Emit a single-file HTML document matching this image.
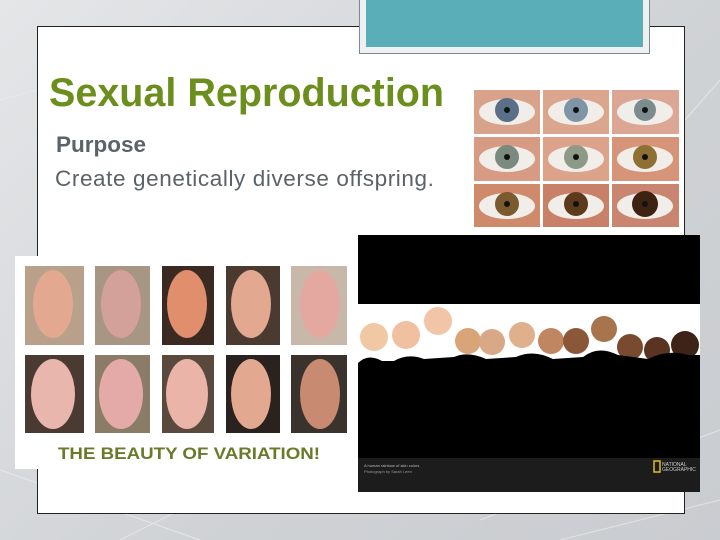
<!DOCTYPE html>
<html><head><meta charset="utf-8"><style>
body{margin:0;width:720px;height:540px;overflow:hidden;background:linear-gradient(135deg,#e4e6e8,#cfd2d5 60%,#c9ccd0);font-family:"Liberation Sans",sans-serif;position:relative}
.abs{position:absolute}
</style></head><body>
<svg class="abs" style="left:0;top:0" width="720" height="540"><g stroke="#e8eaec" stroke-width="1" fill="none" opacity=".8"><path d="M0 470 L200 540 M120 540 L260 470 M480 520 L720 430 M560 540 L720 500 M0 100 L37 90 M685 120 L720 80"/></g></svg>
<div class="abs" style="left:37px;top:26px;width:646px;height:486px;background:#fff;border:1px solid #222"></div>
<div class="abs" style="left:359px;top:-2px;width:289px;height:54px;background:#eef0f2;border:1px solid #7c8a92"></div>
<div class="abs" style="left:366px;top:0;width:277px;height:47px;background:#5aaeb8"></div>
<div class="abs" style="left:49px;top:71px;font-size:39.5px;font-weight:bold;color:#6c8e1c;letter-spacing:0px">Sexual Reproduction</div>
<div class="abs" style="left:56px;top:132px;font-size:22.5px;font-weight:bold;color:#5b6268">Purpose</div>
<div class="abs" style="left:55px;top:166px;font-size:22.5px;color:#5b6268;letter-spacing:0.6px">Create genetically diverse offspring.</div>
<svg class="abs" style="left:474px;top:90px" width="205" height="137">
<rect width="205" height="137" fill="#fff"/>
<g>
<rect x="0" y="0" width="66" height="44" fill="#d9a28a"/><rect x="69" y="0" width="66" height="44" fill="#dca58e"/><rect x="138" y="0" width="67" height="44" fill="#dba693"/>
<rect x="0" y="47" width="66" height="44" fill="#d79a82"/><rect x="69" y="47" width="66" height="44" fill="#dca38a"/><rect x="138" y="47" width="67" height="44" fill="#d69478"/>
<rect x="0" y="94" width="66" height="43" fill="#cf8a6c"/><rect x="69" y="94" width="66" height="43" fill="#c88068"/><rect x="138" y="94" width="67" height="43" fill="#c98570"/>
</g>
<g fill="#f1eeea"><ellipse cx="33" cy="22" rx="28" ry="13"/><ellipse cx="102" cy="22" rx="28" ry="13"/><ellipse cx="171" cy="22" rx="28" ry="13"/><ellipse cx="33" cy="69" rx="28" ry="13"/><ellipse cx="102" cy="69" rx="28" ry="13"/><ellipse cx="171" cy="69" rx="28" ry="13"/><ellipse cx="33" cy="116" rx="28" ry="13"/><ellipse cx="102" cy="116" rx="28" ry="13"/><ellipse cx="171" cy="116" rx="28" ry="13"/></g>
<circle cx="33" cy="20" r="12" fill="#5b7088"/><circle cx="102" cy="20" r="12" fill="#7f95a5"/><circle cx="171" cy="20" r="11" fill="#7c8c8e"/>
<circle cx="33" cy="67" r="12" fill="#7b8a7e"/><circle cx="102" cy="67" r="12" fill="#8d9a88"/><circle cx="171" cy="67" r="12" fill="#8d7032"/>
<circle cx="33" cy="114" r="12" fill="#7a5a2e"/><circle cx="102" cy="114" r="12" fill="#5e3a1c"/><circle cx="171" cy="114" r="13" fill="#3e2212"/>
<g fill="#111"><circle cx="33" cy="20" r="3"/><circle cx="102" cy="20" r="3"/><circle cx="171" cy="20" r="3"/><circle cx="33" cy="67" r="3"/><circle cx="102" cy="67" r="3"/><circle cx="171" cy="67" r="3"/><circle cx="33" cy="114" r="3"/><circle cx="102" cy="114" r="3"/><circle cx="171" cy="114" r="3"/></g>
</svg>
<svg class="abs" style="left:15px;top:256px" width="342" height="213">
<rect width="342" height="213" fill="#fff"/>
<g>
<rect x="10" y="10" width="59" height="79" fill="#b8a08a"/><rect x="80" y="10" width="55" height="79" fill="#a89684"/><rect x="147" y="10" width="52" height="79" fill="#3a2a22"/><rect x="211" y="10" width="54" height="79" fill="#4a3a30"/><rect x="276" y="10" width="56" height="79" fill="#c8b8aa"/>
<rect x="10" y="99" width="59" height="78" fill="#4a3a32"/><rect x="80" y="99" width="55" height="78" fill="#8a7c66"/><rect x="147" y="99" width="52" height="78" fill="#5a4a3e"/><rect x="211" y="99" width="54" height="78" fill="#2a221e"/><rect x="276" y="99" width="56" height="78" fill="#3a322c"/>
</g>
<g fill="#e2a890"><ellipse cx="38" cy="48" rx="20" ry="34"/><ellipse cx="106" cy="48" rx="20" ry="34" fill="#d4a09a"/><ellipse cx="172" cy="48" rx="20" ry="34" fill="#e08e6c"/><ellipse cx="236" cy="48" rx="20" ry="34"/><ellipse cx="305" cy="48" rx="20" ry="34" fill="#e4a8a0"/>
<ellipse cx="38" cy="138" rx="22" ry="35" fill="#e8b6ac"/><ellipse cx="106" cy="138" rx="22" ry="35" fill="#e4aaa8"/><ellipse cx="172" cy="138" rx="21" ry="35" fill="#eab4a8"/><ellipse cx="236" cy="138" rx="20" ry="35"/><ellipse cx="305" cy="138" rx="20" ry="35" fill="#c88a70"/></g>
<text x="43" y="203" font-family="Liberation Sans" font-weight="bold" font-size="17" fill="#6a7a2a" textLength="262" lengthAdjust="spacingAndGlyphs">THE BEAUTY OF VARIATION!</text>
</svg>
<svg class="abs" style="left:358px;top:235px" width="342" height="257">
<rect width="342" height="257" fill="#000"/>
<rect y="69" width="342" height="87" fill="#fff"/>
<g fill="#d9a886"><circle cx="16" cy="102" r="14" fill="#f0c8a4"/><circle cx="48" cy="100" r="14" fill="#f0c0a0"/><circle cx="80" cy="86" r="14" fill="#f2c4a8"/><circle cx="110" cy="106" r="13" fill="#d8a478"/><circle cx="134" cy="107" r="13"/><circle cx="164" cy="100" r="13" fill="#e0b08c"/><circle cx="193" cy="106" r="13" fill="#c08660"/><circle cx="218" cy="106" r="13" fill="#8a5838"/><circle cx="246" cy="94" r="13" fill="#a8744e"/><circle cx="272" cy="112" r="13" fill="#7a4a30"/><circle cx="299" cy="115" r="13" fill="#5a3420"/><circle cx="327" cy="110" r="14" fill="#3e2418"/></g>
<g fill="#000"><path d="M0 156 L0 128 Q10 118 24 126 L36 126 Q50 118 66 124 L96 122 Q110 116 128 124 L158 122 Q175 114 195 124 L225 122 Q240 110 260 120 L290 124 Q310 114 330 120 L342 120 L342 156Z"/></g>
<rect y="223" width="342" height="34" fill="#1c1c1c"/>
<text x="6" y="232" font-size="4" fill="#bbb" font-family="Liberation Sans">A human rainbow of skin colors</text>
<text x="6" y="238" font-size="4" fill="#999" font-family="Liberation Sans">Photograph by Sarah Leen</text>
<rect x="296" y="226" width="6" height="11" fill="none" stroke="#e0c020" stroke-width="1.5"/>
<text x="304" y="231" font-size="5" fill="#ccc" font-family="Liberation Sans">NATIONAL</text>
<text x="304" y="236" font-size="5" fill="#ccc" font-family="Liberation Sans">GEOGRAPHIC</text>
</svg>
</body></html>
